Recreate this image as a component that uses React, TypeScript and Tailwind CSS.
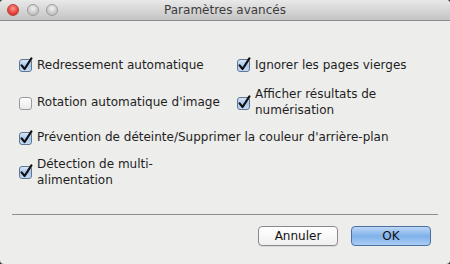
import React from "react";

const font = { fontFamily: '"DejaVu Sans", Verdana, sans-serif' };

const CheckBox = ({ checked }: { checked: boolean }) => (
  <svg width="16" height="16" viewBox="0 0 16 16" className="shrink-0">
    <defs>
      <linearGradient id="on" x1="0" y1="0" x2="0" y2="1">
        <stop offset="0" stopColor="#dbe8f8" />
        <stop offset="0.5" stopColor="#a9c7ec" />
        <stop offset="1" stopColor="#c8dcf4" />
      </linearGradient>
      <linearGradient id="off" x1="0" y1="0" x2="0" y2="1">
        <stop offset="0" stopColor="#ffffff" />
        <stop offset="1" stopColor="#e9e9e9" />
      </linearGradient>
    </defs>
    <rect
      x="0.5"
      y="2.5"
      width="12"
      height="12"
      rx="2.5"
      fill={checked ? "url(#on)" : "url(#off)"}
      stroke={checked ? "#5f7695" : "#9a9a9a"}
    />
    {checked && (
      <path
        d="M2.6 8.4 L5.6 12 L12.4 1.4"
        fill="none"
        stroke="#111"
        strokeWidth="2.2"
        strokeLinecap="round"
        strokeLinejoin="round"
      />
    )}
  </svg>
);

const Option = ({
  label,
  checked,
  className = "",
}: {
  label: React.ReactNode;
  checked: boolean;
  className?: string;
}) => (
  <div className={`flex items-center gap-[2px] ${className}`}>
    <CheckBox checked={checked} />
    <span className="text-[12px] leading-[16px] text-[#1e1e1e] -mt-[1px]">{label}</span>
  </div>
);

const Light = ({ red }: { red?: boolean }) => (
  <div
    className={`w-[12px] h-[12px] rounded-full border ${
      red
        ? "border-[#b8443c] bg-[radial-gradient(circle_at_50%_35%,#ff9a90,#e5403a_60%,#c52a25)]"
        : "border-[#9c9c9c] bg-[radial-gradient(circle_at_50%_35%,#f2f2f2,#c9c9c9_60%,#b4b4b4)]"
    }`}
  />
);

export default function App() {
  return (
    <div className="w-[450px] h-[264px] bg-[#3a3a3a]" style={font}>
      <div className="w-full h-full rounded-[4px] overflow-hidden bg-[#ededeb] flex flex-col">
        <div className="h-[21px] shrink-0 bg-gradient-to-b from-[#e9e9e9] to-[#c4c4c4] border-b border-[#8c8c8c] relative flex items-center px-[7px] gap-[7.5px]">
          <Light red />
          <Light />
          <Light />
          <div className="absolute inset-0 flex items-center justify-center text-[12px] text-[#3c3c3c]">
            Paramètres avancés
          </div>
        </div>

        <div className="flex flex-col pl-[19px] pt-[26px]">
          <div className="flex h-[36px] items-center">
            <Option className="w-[218px]" checked label="Redressement automatique" />
            <Option checked label="Ignorer les pages vierges" />
          </div>
          <div className="flex h-[39px] items-center">
            <Option className="w-[218px]" checked={false} label="Rotation automatique d'image" />
            <Option
              checked
              label={
                <>
                  Afficher résultats de
                  <br />
                  numérisation
                </>
              }
            />
          </div>
          <div className="flex h-[31px] items-center">
            <Option checked label="Prévention de déteinte/Supprimer la couleur d'arrière-plan" />
          </div>
          <div className="flex h-[38px] items-center">
            <Option
              checked
              label={
                <>
                  Détection de multi-
                  <br />
                  alimentation
                </>
              }
            />
          </div>
        </div>

        <div className="mx-[12px] mt-[23px] h-px bg-[#8e8e8e]" />

        <div className="flex justify-end gap-[13px] pr-[19px] mt-[11px]">
          <button className="w-[80px] h-[20px] rounded-[4px] border border-[#8a8a8a] bg-gradient-to-b from-[#ffffff] to-[#f0f0f0] text-[12px] text-[#111] leading-none shadow-[0_1px_0_rgba(0,0,0,0.08)]">
            Annuler
          </button>
          <button className="w-[80px] h-[20px] rounded-[4px] border border-[#4d6f9f] bg-gradient-to-b from-[#bcd8f7] via-[#7fb1ea] to-[#a9cdf5] text-[12px] text-[#111] leading-none">
            OK
          </button>
        </div>
      </div>
    </div>
  );
}
